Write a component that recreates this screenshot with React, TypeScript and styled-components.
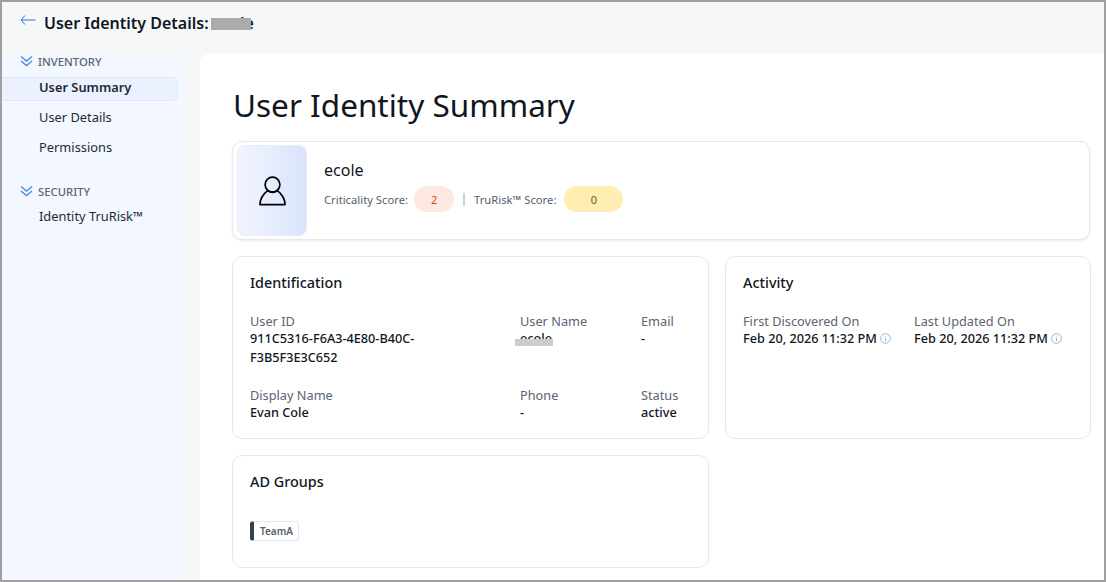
import React from "react";
import styled, { createGlobalStyle } from "styled-components";

const Global = createGlobalStyle`
  html, body { margin: 0; padding: 0; background: #fff; }
  * { box-sizing: border-box; }
  body { font-family: "Noto Sans", "Open Sans", sans-serif; }
`;

const Frame = styled.div`
  width: 1106px;
  height: 582px;
  border: 2px solid #a0a0a0;
  background: #f6f7f9;
  display: flex;
  flex-direction: column;
  overflow: hidden;
`;
const Header = styled.header`
  height: 52px;
  flex: none;
  display: flex;
  align-items: flex-start;
  padding: 9px 0 0 18px;
  gap: 8px;
`;
const BackIcon = styled.svg`
  width: 16px;
  height: 12px;
  margin-top: 3px;
  flex: none;
`;
const HeaderTitle = styled.h1`
  margin: 0;
  font-size: 16px;
  line-height: 24px;
  font-weight: 600;
  color: #10161e;
  position: relative;
  white-space: nowrap;
`;
const Redact = styled.span<{ $w: number; $h: number; $l: number; $t: number; $c: string }>`
  position: absolute;
  width: ${(p) => p.$w}px;
  height: ${(p) => p.$h}px;
  left: ${(p) => p.$l}px;
  top: ${(p) => p.$t}px;
  background: ${(p) => p.$c};
`;
const Body = styled.div`
  flex: 1;
  display: flex;
  min-height: 0;
`;
const Sidebar = styled.nav`
  width: 183px;
  flex: none;
  background: #f3f7ff;
  display: flex;
  flex-direction: column;
`;
const SectionHead = styled.div<{ $mt: number }>`
  display: flex;
  align-items: center;
  gap: 5px;
  margin-top: ${(p) => p.$mt}px;
  padding-left: 18px;
  height: 16px;
  font-size: 11.3px;
  font-weight: 500;
  color: #5a6473;
`;
const NavItem = styled.div<{ $active?: boolean; $mt: number }>`
  width: 176px;
  height: 24px;
  margin-top: ${(p) => p.$mt}px;
  padding-left: 37px;
  font-size: 12.85px;
  line-height: 18px;
  font-weight: ${(p) => (p.$active ? 600 : 400)};
  color: #1f2a37;
  border: 1px solid ${(p) => (p.$active ? "#dfe8fb" : "transparent")};
  border-left: none;
  border-radius: 0 6px 6px 0;
  background: ${(p) => (p.$active ? "#ebf1fe" : "transparent")};
`;
const Main = styled.main`
  margin-left: 15px;
  flex: 1;
  background: #fff;
  border-radius: 8px 0 0 0;
  padding: 29px 14px 0 32px;
  min-width: 0;
`;
const PageTitle = styled.h2`
  margin: 0 0 0 1px;
  font-size: 31.5px;
  line-height: 44px;
  font-weight: 400;
  color: #10161e;
`;
const Card = styled.section`
  background: #fff;
  border: 1px solid #e6e8eb;
  border-radius: 10px;
`;
const ProfileCard = styled(Card)`
  margin-top: 14px;
  height: 99px;
  display: flex;
  padding: 3px 3px 3px 4px;
  box-shadow: 0 1px 3px rgba(20, 30, 50, 0.08);
`;
const Avatar = styled.div`
  width: 70px;
  height: 91px;
  border-radius: 8px;
  border: 1px solid #e8edf8;
  background: linear-gradient(90deg, #f1f5fe, #d9e3fb);
  display: flex;
  align-items: center;
  justify-content: center;
  flex: none;
`;
const ProfileInfo = styled.div`
  margin-left: 17px;
  padding-top: 13px;
`;
const ProfileName = styled.div`
  font-size: 16px;
  line-height: 24px;
  color: #10161e;
`;
const ScoreRow = styled.div`
  display: flex;
  align-items: center;
  margin-top: 4px;
  font-size: 11.25px;
  color: #535f6e;
`;
const Pill = styled.span<{ $bg: string; $fg: string; $w: number; $ml: number }>`
  width: ${(p) => p.$w}px;
  height: 26px;
  border-radius: 13px;
  background: ${(p) => p.$bg};
  color: ${(p) => p.$fg};
  display: flex;
  align-items: center;
  justify-content: center;
  margin-left: ${(p) => p.$ml}px;
  font-size: 11px;
`;
const Divider = styled.span`
  width: 2px;
  height: 13px;
  background: #c3d5ea;
  margin: 0 9px 0 9px;
`;
const Grid = styled.div`
  display: grid;
  grid-template-columns: 477px 366px;
  gap: 16px;
  margin-top: 16px;
`;
const InfoCard = styled(Card)`
  height: 183px;
  padding: 15px 16px 0 17px;
  position: relative;
`;
const GroupCard = styled(Card)`
  height: 113px;
  padding: 15px 16px 0 17px;
`;
const CardTitle = styled.h3`
  margin: 0;
  font-size: 14.4px;
  line-height: 22px;
  font-weight: 500;
  color: #10161e;
`;
const Fields = styled.div<{ $cols: string; $gap: string }>`
  display: grid;
  grid-template-columns: ${(p) => p.$cols};
  row-gap: ${(p) => p.$gap};
  margin-top: 19px;
`;
const Field = styled.div`
  min-width: 0;
  position: relative;
`;
const Label = styled.div`
  font-size: 12.75px;
  line-height: 16px;
  color: #5a6473;
`;
const Value = styled.div`
  font-size: 12.7px;
  line-height: 19px;
  color: #10161e;
  font-weight: 500;
  display: flex;
  align-items: center;
  gap: 3px;
  white-space: nowrap;
`;
const WrapValue = styled(Value)`
  display: block;
  white-space: normal;
  width: 190px;
`;
const Tag = styled.div`
  display: inline-flex;
  margin-top: 28px;
  height: 20px;
  align-items: center;
  border: 1px solid #e3e6ea;
  border-left: 4px solid #2f4450;
  border-radius: 3px;
  padding: 0 5px 0 6px;
  font-size: 10px;
  font-weight: 600;
  color: #56616d;
`;

const Chevrons = () => (
  <svg width="13" height="12" viewBox="0 0 13 12" fill="none" stroke="#4f8ae8" strokeWidth="1.4" strokeLinejoin="miter">
    <path d="M1 1.5 6.5 6 12 1.5" />
    <path d="M1 6 6.5 10.5 12 6" />
  </svg>
);
const UserIcon = () => (
  <svg width="27" height="30" viewBox="0 0 27 30" fill="none" stroke="#000" strokeWidth="1.7" strokeLinejoin="round">
    <circle cx="13.5" cy="8.6" r="7.4" />
    <path d="M1 28.6C1 21.5 4.8 17.6 8.6 14.6 11.5 16.6 15.5 16.6 18.4 14.6 22.2 17.6 26 21.5 26 28.6Z" />
  </svg>
);
const InfoIcon = () => (
  <svg width="11" height="11" viewBox="0 0 11 11" fill="none" stroke="#7fa6d0" strokeWidth="0.8">
    <circle cx="5.5" cy="5.5" r="4.8" />
    <path d="M5.5 4.8V8.2M5.5 2.8V3.6" />
  </svg>
);

export default function App() {
  return (
    <>
      <Global />
      <Frame>
        <Header>
          <BackIcon viewBox="0 0 16 12" fill="none" stroke="#2f6fe0" strokeWidth="1">
            <path d="M15.5 6H1M5 1.5 1 6 5 10.5" />
          </BackIcon>
          <HeaderTitle>
            User Identity Details: ecole
            <Redact $w={40} $h={12} $l={167} $t={7} $c="#ababab" />
          </HeaderTitle>
        </Header>
        <Body>
          <Sidebar>
            <SectionHead $mt={-1}>
              <Chevrons />
              INVENTORY
            </SectionHead>
            <NavItem $active $mt={8}>User Summary</NavItem>
            <NavItem $mt={6}>User Details</NavItem>
            <NavItem $mt={6}>Permissions</NavItem>
            <SectionHead $mt={22}>
              <Chevrons />
              SECURITY
            </SectionHead>
            <NavItem $mt={7}>Identity TruRisk™</NavItem>
          </Sidebar>
          <Main>
            <PageTitle>User Identity Summary</PageTitle>
            <ProfileCard>
              <Avatar>
                <UserIcon />
              </Avatar>
              <ProfileInfo>
                <ProfileName>ecole</ProfileName>
                <ScoreRow>
                  Criticality Score:
                  <Pill $bg="#fde8e2" $fg="#cf4a1f" $w={40} $ml={6}>2</Pill>
                  <Divider />
                  TruRisk™ Score:
                  <Pill $bg="#feeeb2" $fg="#7a5a12" $w={59} $ml={8}>0</Pill>
                </ScoreRow>
              </ProfileInfo>
            </ProfileCard>
            <Grid>
              <InfoCard>
                <CardTitle>Identification</CardTitle>
                <Fields $cols="270px 121px 1fr" $gap="20px">
                  <Field>
                    <Label>User ID</Label>
                    <WrapValue>911C5316-F6A3-4E80-B40C-F3B5F3E3C652</WrapValue>
                  </Field>
                  <Field>
                    <Label>User Name</Label>
                    <Value>ecole</Value>
                    <Redact $w={38} $h={7} $l={-5} $t={26} $c="#cdcdcd" />
                  </Field>
                  <Field>
                    <Label>Email</Label>
                    <Value>-</Value>
                  </Field>
                  <Field>
                    <Label>Display Name</Label>
                    <Value>Evan Cole</Value>
                  </Field>
                  <Field>
                    <Label>Phone</Label>
                    <Value>-</Value>
                  </Field>
                  <Field>
                    <Label>Status</Label>
                    <Value>active</Value>
                  </Field>
                </Fields>
              </InfoCard>
              <InfoCard>
                <CardTitle>Activity</CardTitle>
                <Fields $cols="171px 1fr" $gap="0">
                  <Field>
                    <Label>First Discovered On</Label>
                    <Value>Feb 20, 2026 11:32 PM <InfoIcon /></Value>
                  </Field>
                  <Field>
                    <Label>Last Updated On</Label>
                    <Value>Feb 20, 2026 11:32 PM <InfoIcon /></Value>
                  </Field>
                </Fields>
              </InfoCard>
              <GroupCard>
                <CardTitle>AD Groups</CardTitle>
                <Tag>TeamA</Tag>
              </GroupCard>
            </Grid>
          </Main>
        </Body>
      </Frame>
    </>
  );
}
